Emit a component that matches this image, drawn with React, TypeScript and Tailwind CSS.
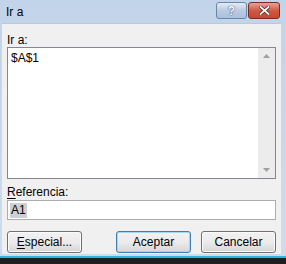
import { useState } from "react";

function HelpButton() {
  return (
    <div className="w-[31px] h-[17px] rounded-[3px] border border-[#6d86a6] bg-gradient-to-b from-[#e3ecf6] via-[#b9cbe2] to-[#a9c0dd] flex items-center justify-center">
      <span className="text-[12px] leading-none font-bold text-white [text-shadow:0_0_1px_#2c3e57,0_0_1px_#2c3e57]">?</span>
    </div>
  );
}

function CloseButton() {
  return (
    <div className="w-[32px] h-[17px] rounded-[3px] border border-[#7a2a22] bg-gradient-to-b from-[#e7a193] via-[#cf5a45] to-[#c9472f] flex items-center justify-center">
      <svg width="11" height="9" viewBox="0 0 11 9">
        <path d="M1.5 1 L9.5 8 M9.5 1 L1.5 8" stroke="#4a1a12" strokeWidth="3.2" strokeLinecap="square" />
        <path d="M1.5 1 L9.5 8 M9.5 1 L1.5 8" stroke="#ffffff" strokeWidth="1.8" strokeLinecap="square" />
      </svg>
    </div>
  );
}

function WinButton({ label, u, isDefault }: { label: string; u?: boolean; isDefault?: boolean }) {
  return (
    <button
      className={`h-[22px] rounded-[3px] border bg-gradient-to-b from-[#f2f2f2] via-[#ebebeb] to-[#d6d6d6] text-[12px] text-black ${
        isDefault ? "border-[#3c7fb1] shadow-[inset_0_0_0_1px_#a3d8f5]" : "border-[#707070] shadow-[inset_0_0_0_1px_#fbfbfb]"
      }`}
    >
      {u ? (
        <>
          <span className="underline underline-offset-2">{label[0]}</span>
          {label.slice(1)}
        </>
      ) : (
        label
      )}
    </button>
  );
}

export default function App() {
  const [items] = useState(["$A$1"]);

  return (
    <div
      className="w-[286px] h-[264px] bg-[#1a1f26] overflow-hidden"
      style={{ fontFamily: '"Liberation Sans", Arial, sans-serif' }}
    >
      <div className="w-[286px] h-[258px] bg-gradient-to-b from-[#c2d4ea] to-[#cddcee] flex flex-col border-b-[2px] border-[#2fb4e6]">
        {/* title bar */}
        <div className="h-[23px] flex items-center pl-[6px] pr-[6px] shrink-0">
          <span className="text-[12px] text-black flex-1">Ir a</span>
          <div className="flex items-center gap-[1px] mt-[-2px]">
            <HelpButton />
            <CloseButton />
          </div>
        </div>

        {/* client area */}
        <div className="flex-1 ml-[2px] mr-[5px] mb-[2px] bg-[#f0f0f0] border-t border-[#b9c9dc] px-[5px] pt-[9px] flex flex-col">
          <div className="text-[12px] text-black leading-[14px]">Ir a:</div>

          <div className="h-[132px] border border-[#828790] bg-white flex">
            <div className="flex-1 pl-[3px] pt-[3px]">
              {items.map((it) => (
                <div key={it} className="text-[12px] leading-[15px] text-black">
                  {it}
                </div>
              ))}
            </div>
            <div className="w-[17px] bg-[#ececec] flex flex-col items-center justify-between py-[6px]">
              <svg width="7" height="4" viewBox="0 0 7 4">
                <path d="M0 4 L3.5 0 L7 4 Z" fill="#a0a0a0" />
              </svg>
              <svg width="7" height="4" viewBox="0 0 7 4">
                <path d="M0 0 L3.5 4 L7 0 Z" fill="#a0a0a0" />
              </svg>
            </div>
          </div>

          <div className="text-[12px] text-black leading-[14px] mt-[6px] mb-[1px]">
            <span className="underline underline-offset-2">R</span>eferencia:
          </div>

          <div className="h-[20px] border border-[#abadb3] bg-white flex items-center pl-[2px]">
            <span className="text-[12px] leading-[15px] bg-[#cfcfcf] text-black px-[1px]">A1</span>
          </div>

          <div className="flex items-center mt-[11px]">
            <div className="w-[75px] flex flex-col">
              <WinButton label="Especial..." u />
            </div>
            <div className="flex-1" />
            <div className="w-[75px] flex flex-col">
              <WinButton label="Aceptar" isDefault />
            </div>
            <div className="w-[10px]" />
            <div className="w-[75px] flex flex-col">
              <WinButton label="Cancelar" />
            </div>
          </div>
        </div>
      </div>
    </div>
  );
}
